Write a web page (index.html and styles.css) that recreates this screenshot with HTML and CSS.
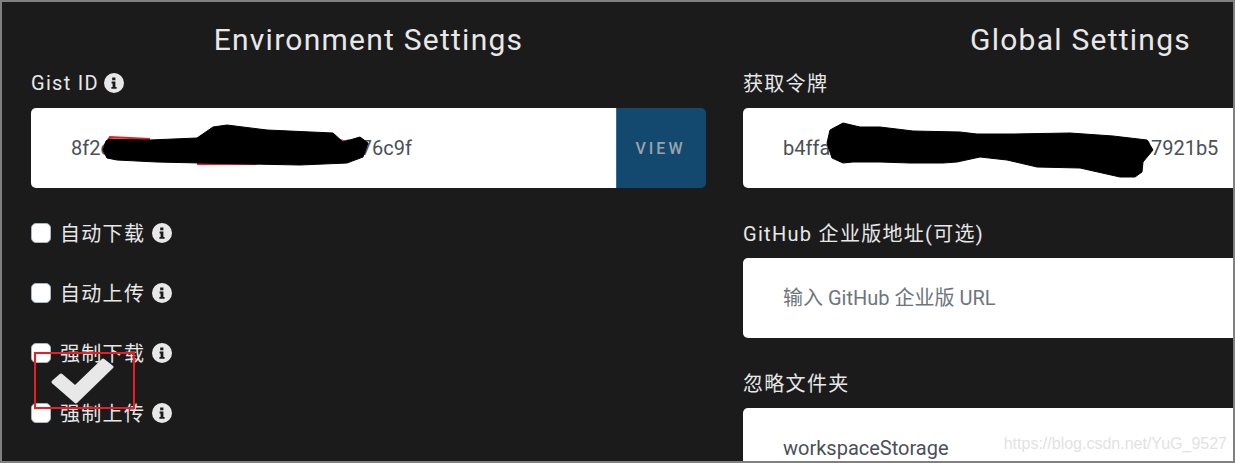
FILE: index.html
```html
<!DOCTYPE html>
<html lang="zh-CN">
<head>
    <meta charset="UTF-8">
    <meta name="viewport" content="width=device-width, initial-scale=1.0">
    <title>Settings</title>
    <link rel="stylesheet" href="styles.css">
</head>
<body>
    <svg width="0" height="0" class="icon-defs">
        <symbol id="info" viewBox="0 0 20 20">
            <circle cx="10" cy="10" r="10" fill="#e8e8e8"/>
            <path d="M8.2 4.4h3.2v2.8H8.2zM7.6 8.6h3.8v5.4h1.2v1.8H7.4V14h1.2v-3.6h-1z" fill="#1b1b1b"/>
        </symbol>
    </svg>
    <div class="frame">
        <div class="columns">
            <section class="column">
                <h2>Environment Settings</h2>
                <div class="field">
                    <label class="field-label">Gist ID <svg class="info"><use href="#info"/></svg></label>
                    <div class="input-group">
                        <input class="text-input" type="text" value="8f2c00000000000000000000ff076c9f">
                        <button class="view-button">VIEW</button>
                    </div>
                </div>
                <div class="checks">
                    <label class="check"><input type="checkbox"><span>自动下载</span><svg class="info"><use href="#info"/></svg></label>
                    <label class="check"><input type="checkbox"><span>自动上传</span><svg class="info"><use href="#info"/></svg></label>
                    <label class="check"><input type="checkbox"><span>强制下载</span><svg class="info"><use href="#info"/></svg></label>
                    <label class="check"><input type="checkbox"><span>强制上传</span><svg class="info"><use href="#info"/></svg></label>
                </div>
            </section>
            <section class="column">
                <h2>Global Settings</h2>
                <div class="field">
                    <label class="field-label"><span>获取令牌</span></label>
                    <input class="text-input" type="text" value="b4ffa0000000000000000000000000fc007921b5">
                </div>
                <div class="field">
                    <label class="field-label"><span>GitHub 企业版地址(可选)</span></label>
                    <input class="text-input" type="text" placeholder="输入 GitHub 企业版 URL">
                </div>
                <div class="field">
                    <label class="field-label"><span>忽略文件夹</span></label>
                    <input class="text-input" type="text" value="workspaceStorage">
                </div>
            </section>
        </div>

        <!-- marks drawn over the screenshot -->
        <svg class="markup" width="1235" height="463" viewBox="0 0 1235 463">
            <path d="M104 146L110 137L150 139M197 164H257M343 141H351" fill="none" stroke="#ed1c24" stroke-width="2"/>
            <path d="M103 150L106 141L110 139L150 140L197 138L213 127L227 125L267 130L333 133L343 142L360 137L368 143L363 157L347 163L300 165L200 163L157 162L117 160L107 158Z" fill="#000" stroke="#000" stroke-linejoin="round"/>
            <path d="M827 143L830 130L843 123L860 127L880 127L913 131L960 132L977 134L1013 134L1070 133L1113 136L1147 140L1153 150L1143 162L1142 172L1135 177L1120 177L1080 168L1037 167L1007 160L980 157L957 162L943 163L910 163L880 162L853 162L843 163L832 158Z" fill="#000" stroke="#000" stroke-linejoin="round"/>
            <rect x="35" y="353" width="99" height="55" fill="none" stroke="#ed1c24" stroke-width="2"/>
            <path d="M61 375L75 387L103 360L112 367L76 402L53 382Z" fill="#e8e8e8" stroke="#e8e8e8" stroke-width="3" stroke-linejoin="round"/>
        </svg>
        <span class="watermark">https://blog.csdn.net/YuG_9527</span>
    </div>
</body>
</html>
```

FILE: styles.css
```css
body {
    margin: 0;
    font-family: Roboto, "Noto Sans CJK SC", sans-serif;
    background-color: #1b1b1b;
}
.icon-defs {
    position: absolute;
}
.frame {
    position: relative;
    box-sizing: border-box;
    width: 1235px;
    height: 463px;
    border: 2px solid #808080;
    background-color: #1b1b1b;
    overflow: hidden;
}
.columns {
    display: flex;
    gap: 37px;
    width: 1387px;
    padding-left: 29px;
}
.column {
    width: 675px;
    flex: none;
}
.column h2 {
    margin: 0;
    height: 64px;
    padding-top: 20px;
    box-sizing: border-box;
    font-size: 30px;
    font-weight: 400;
    line-height: 36px;
    letter-spacing: 1.25px;
    text-align: center;
    color: #e8e8e8;
}
.field {
    height: 150px;
}
.field-label {
    display: flex;
    align-items: center;
    gap: 5px;
    height: 34px;
    margin-bottom: 8px;
    font-size: 20px;
    letter-spacing: 1.3px;
    color: #e8e8e8;
}
.field-label span {
    margin-bottom: 2px;
}
.input-group {
    display: flex;
}
.text-input {
    display: block;
    box-sizing: border-box;
    width: 100%;
    height: 80px;
    padding: 0 40px;
    border: none;
    border-radius: 5px;
    background-color: #fff;
    font-family: inherit;
    font-size: 20px;
    color: #495057;
}
.text-input::placeholder {
    color: #6c757d;
    opacity: 1;
}
.input-group .text-input {
    border-radius: 5px 0 0 5px;
}
.view-button {
    flex: none;
    width: 90px;
    padding: 0 2px 0 0;
    border: none;
    border-left: 1px solid #2f6f9f;
    border-radius: 0 5px 5px 0;
    background-color: #14496f;
    font-family: inherit;
    font-size: 16px;
    font-weight: 500;
    letter-spacing: 3px;
    color: #9aa3ab;
}
.checks {
    margin-top: -13px;
    display: flex;
    flex-direction: column;
}
.check {
    display: flex;
    align-items: center;
    height: 60px;
    font-size: 20px;
    letter-spacing: 1.3px;
    color: #e8e8e8;
}
.check input {
    appearance: none;
    box-sizing: border-box;
    width: 20px;
    height: 20px;
    margin: 0 9px 0 0;
    border: 1px solid #adb5bd;
    border-radius: 5px;
    background-color: #fff;
}
.check span {
    margin: 0 7px 2px 0;
}
.info {
    width: 20px;
    height: 20px;
    flex: none;
}
.markup {
    position: absolute;
    left: -2px;
    top: -2px;
}
.watermark {
    position: absolute;
    right: 6px;
    top: 433px;
    font-family: "Liberation Sans", sans-serif;
    font-size: 16px;
    color: #e2e2e2;
}
```
